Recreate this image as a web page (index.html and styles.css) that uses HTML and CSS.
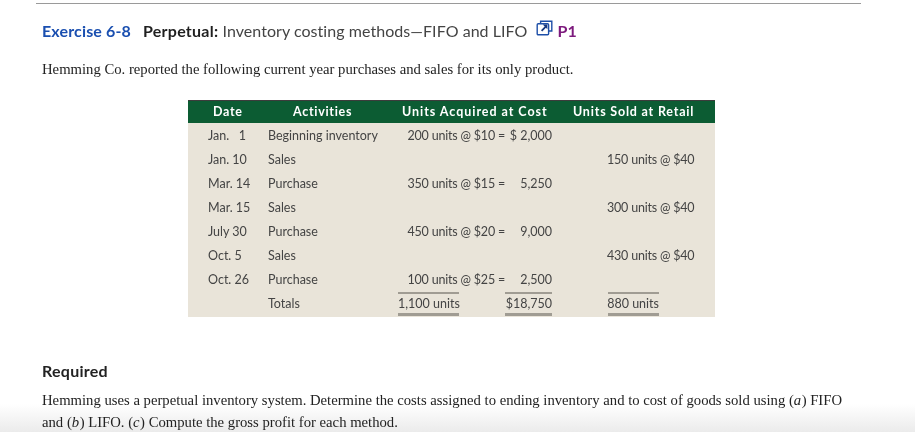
FILE: index.html
```html
<!DOCTYPE html>
<html lang="en">
<head>
<meta charset="utf-8">
<title>Exercise 6-8</title>
<link rel="stylesheet" href="styles.css">
</head>
<body>
<main class="page">
  <hr class="top-rule">
  <h1 class="title">
    <span class="ex-num">Exercise 6-8</span>
    <span class="ex-name"><b>Perpetual:</b> Inventory costing methods—FIFO and LIFO</span>
    <svg class="link-icon" width="17" height="17" viewBox="0 0 17 17" fill="none" stroke="#1d4fa8" stroke-width="1.4" aria-hidden="true">
      <path d="M4.6 3.6V1.2H15.8V11H12.8"/>
      <rect x="1.2" y="3.8" width="11.4" height="11" rx="1"/>
      <path d="M5.6 10.8 10 6.4" stroke="#15377f" stroke-width="1.8"/>
      <path d="M6.8 4.6H11.4V9.2Z" fill="#15377f" stroke="none"/>
    </svg>
    <span class="lo">P1</span>
  </h1>
  <p class="serif intro">Hemming Co. reported the following current year purchases and sales for its only product.</p>

  <div class="ledger">
    <div class="head date">Date</div>
    <div class="head act">Activities</div>
    <div class="head acq">Units Acquired at Cost</div>
    <div class="head ret">Units Sold at Retail</div>

    <div class="c date">Jan.&nbsp;&nbsp;&nbsp;1</div><div class="c act">Beginning inventory</div>
    <div class="c u">200 units</div><div class="c p">@ $10 =</div><div class="c a">$&nbsp;2,000</div><div class="c su"></div><div class="c sp"></div>

    <div class="c date">Jan. 10</div><div class="c act">Sales</div>
    <div class="c u"></div><div class="c p"></div><div class="c a"></div><div class="c su">150 units</div><div class="c sp">@ $40</div>

    <div class="c date">Mar. 14</div><div class="c act">Purchase</div>
    <div class="c u">350 units</div><div class="c p">@ $15 =</div><div class="c a">5,250</div><div class="c su"></div><div class="c sp"></div>

    <div class="c date">Mar. 15</div><div class="c act">Sales</div>
    <div class="c u"></div><div class="c p"></div><div class="c a"></div><div class="c su">300 units</div><div class="c sp">@ $40</div>

    <div class="c date">July 30</div><div class="c act">Purchase</div>
    <div class="c u">450 units</div><div class="c p">@ $20 =</div><div class="c a">9,000</div><div class="c su"></div><div class="c sp"></div>

    <div class="c date">Oct. 5</div><div class="c act">Sales</div>
    <div class="c u"></div><div class="c p"></div><div class="c a"></div><div class="c su">430 units</div><div class="c sp">@ $40</div>

    <div class="c date">Oct. 26</div><div class="c act">Purchase</div>
    <div class="c u">100 units</div><div class="c p">@ $25 =</div><div class="c a">2,500</div><div class="c su"></div><div class="c sp"></div>

    <div class="c date"></div><div class="c act">Totals</div>
    <div class="c u total">1,100 units</div><div class="c p"></div><div class="c a total">$18,750</div><div class="c su total">880 units</div><div class="c sp"></div>
  </div>

  <h2 class="req">Required</h2>
  <p class="serif body-text"><span class="line">Hemming uses a perpetual inventory system. Determine the costs assigned to ending inventory and to cost of goods sold using (<i>a</i>) FIFO</span><span class="line">and (<i>b</i>) LIFO. (<i>c</i>) Compute the gross profit for each method.</span></p>
</main>
</body>
</html>
```

FILE: styles.css
```css
html {
  height: 100%;
  background: linear-gradient(to bottom, #fff 404px, #ebebeb 432px);
}
body {
  margin: 0;
  height: 432px;
  overflow: hidden;
  background: transparent;
}
.page {
  display: flex;
  flex-direction: column;
  padding: 3px 54px 0 36px;
  box-sizing: border-box;
  filter: blur(0.3px);
}
.top-rule {
  width: 100%;
  height: 1px;
  margin: 0;
  border: 0;
  background: #9a9a9a;
}
.title {
  display: flex;
  align-items: center;
  margin: 15px 0 0 6px;
  height: 24px;
  font: 400 16px/24px Lato, sans-serif;
  letter-spacing: 0.05px;
  color: #444;
  white-space: nowrap;
}
.ex-num { color: #1a4fb0; font-weight: 700; margin-right: 12px; letter-spacing: 0.15px; }
.ex-name b { color: #1f1f1f; font-weight: 700; letter-spacing: 0.25px; }
.link-icon { margin: -5px 0 0 9px; }
.lo { color: #7d1a7d; font-weight: 700; margin-left: 4px; }
.serif {
  font-family: "Liberation Serif", serif;
  font-size: 14.7px;
  color: #222;
  margin: 0;
}
.serif i { padding-right: 0.5px; }
.intro { margin: 16px 0 0 6px; line-height: 20px; }
.ledger {
  display: grid;
  grid-template-columns: 80px 130px 61px 46px 47px 52px 55px 56px;
  grid-auto-rows: 24px;
  width: 527px;
  margin: 21px 0 0 152px;
  padding-bottom: 1px;
  background: #e9e4d9;
  font: 400 12.5px/24px Lato, sans-serif;
  color: #444;
}
.head {
  box-sizing: border-box;
  height: 23px;
  background: #0c5c33;
  border-top: 1px solid #3c3c3c;
  color: #fff;
  font-weight: 700;
  line-height: 21px;
  letter-spacing: 0.7px;
  white-space: nowrap;
}
.head.date { padding-left: 25px; }
.head.act { padding-left: 25px; }
.head.acq { grid-column: span 3; padding-left: 4px; letter-spacing: 0.96px; }
.head.ret { grid-column: span 3; padding-left: 21px; letter-spacing: 0.8px; }
.c { white-space: nowrap; }
.c.date { padding-left: 20px; }
.u, .p, .a, .su { text-align: right; }
.u, .p, .su, .sp { letter-spacing: -0.2px; }
.u { padding-right: 1.5px; }
.su { grid-column: 7; padding-right: 2px; }
.sp { text-align: left; padding-left: 1px; }
.total { position: relative; }
.u.total { letter-spacing: 0; padding-right: 1px; }
.su.total { letter-spacing: 0; padding-right: 0; }
.total::before, .total::after {
  content: "";
  position: absolute;
  left: 0;
  right: 0;
  background: #a09c93;
}
.su.total::before, .su.total::after { left: 4px; }
.total::before { top: 0; height: 2px; }
.total::after { bottom: 0; height: 3px; }
.req {
  margin: 44px 0 0 6px;
  font: 700 16px/20px Lato, sans-serif;
  letter-spacing: 0.25px;
  color: #222;
}
.body-text { margin: 8px 0 0 6px; line-height: 22px; }
.line { display: block; white-space: nowrap; }
```
